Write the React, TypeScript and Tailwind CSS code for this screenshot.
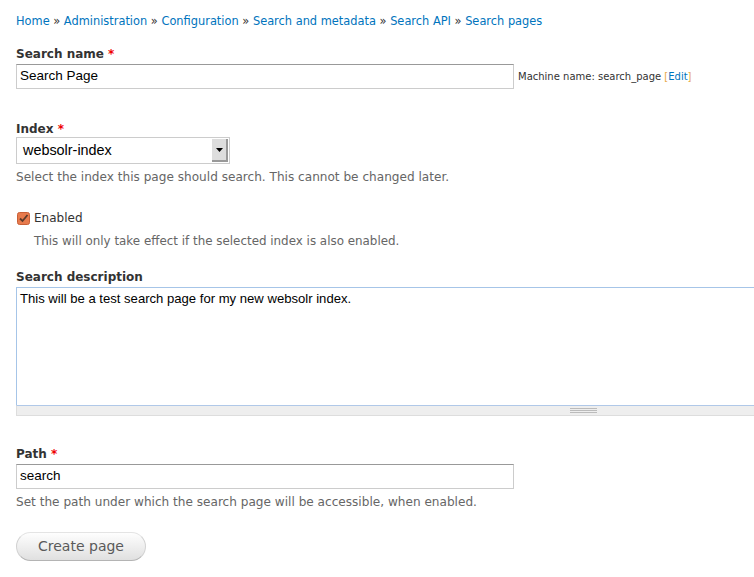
export default function App() {
  const crumbs = [
    "Home",
    "Administration",
    "Configuration",
    "Search and metadata",
    "Search API",
    "Search pages",
  ];

  return (
    <div className="h-[577px] w-[754px] overflow-hidden bg-white font-['DejaVu_Sans',sans-serif] text-[12px] text-[#333]">
      <div className="px-4 pt-[13px]">
        {/* breadcrumb */}
        <div className="h-4 whitespace-nowrap text-[11.4px] leading-4">
          {crumbs.map((c, i) => (
            <span key={c}>
              {i > 0 ? <span className="text-[#333]"> » </span> : null}
              <a className="text-[#0074bd]">{c}</a>
            </span>
          ))}
        </div>

        {/* search name */}
        <label className="mt-[17px] block h-4 font-bold leading-4">
          Search name <span className="text-[#e00]">*</span>
        </label>
        <div className="mt-[2px] flex items-center">
          <div className="flex h-[25px] w-[498px] items-center border border-[#ccc] border-t-[#999] px-[3px] font-['Liberation_Sans',sans-serif] text-[13.5px] text-black">
            Search Page
          </div>
          <span className="ml-[4px] whitespace-nowrap text-[10px]">
            Machine name: search_page <span className="text-[#e8a94c]">[</span>
            <a className="text-[#0074bd]">Edit</a>
            <span className="text-[#e8a94c]">]</span>
          </span>
        </div>

        {/* index */}
        <label className="mt-[32px] block h-4 font-bold leading-4">
          Index <span className="text-[#e00]">*</span>
        </label>
        <div className="flex h-[27px] w-[214px] items-center justify-between border border-[#ccc] pl-[6px] pr-px font-['Liberation_Sans',sans-serif] text-[14.4px] text-black">
          <span>websolr-index</span>
          <span className="flex h-[23px] w-[16px] items-center justify-center border-r-2 border-b-2 border-[#999] bg-[#ddd]">
            <svg width="7" height="4" viewBox="0 0 7 4">
              <path d="M0 0H7L3.5 4Z" fill="#000" />
            </svg>
          </span>
        </div>
        <div className="mt-[5px] h-4 text-[12.1px] leading-4 text-[#666]">
          Select the index this page should search. This cannot be changed later.
        </div>

        {/* enabled */}
        <div className="mt-[25px] flex h-4 items-center leading-4">
          <svg width="13" height="13" viewBox="0 0 13 13" className="ml-px">
            <rect x="0.5" y="0.5" width="12" height="12" rx="2" fill="#e77a4c" stroke="#c95f36" />
            <path d="M3 6.5L5.5 9L10.5 3" fill="none" stroke="#5a3a2a" strokeWidth="1.8" />
          </svg>
          <span className="ml-[4px]">Enabled</span>
        </div>
        <div className="ml-[18px] mt-[7px] h-4 text-[11.9px] leading-4 text-[#666]">
          This will only take effect if the selected index is also enabled.
        </div>

        {/* description */}
        <label className="mt-[20px] block h-4 font-bold leading-4">Search description</label>
        <div className="mt-[2px] w-[1134px]">
          <div className="h-[118px] border border-b-0 border-[#a6c5e8] px-[3px] pt-[2px] font-['Liberation_Sans',sans-serif] text-[13.1px] leading-[18px] text-black">
            This will be a test search page for my new websolr index.
          </div>
          <div className="flex h-[11px] items-center justify-center border border-t-[#b0c8e8] border-[#ddd] bg-[#eee]">
            <div className="flex w-[27px] flex-col gap-px">
              <div className="h-px bg-[#bbb]" />
              <div className="h-px bg-[#bbb]" />
              <div className="h-px bg-[#bbb]" />
            </div>
          </div>
        </div>

        {/* path */}
        <label className="mt-[30px] block h-4 font-bold leading-4">
          Path <span className="text-[#e00]">*</span>
        </label>
        <div className="mt-[2px] flex h-[25px] w-[498px] items-center border border-[#ccc] border-t-[#999] px-[3px] font-['Liberation_Sans',sans-serif] text-[13.5px] text-black">
          search
        </div>
        <div className="mt-[5px] h-4 text-[12.1px] leading-4 text-[#666]">
          Set the path under which the search page will be accessible, when enabled.
        </div>

        <button
          type="button"
          className="mt-[22px] flex h-[29px] w-[130px] items-center justify-center rounded-full border border-[#e4e4e4] border-x-[#d2d2d2] border-b-[#b4b4b4] bg-gradient-to-b from-[#fefefe] to-[#e0e0e0] text-[14px] text-[#5a5a5a]"
        >
          Create page
        </button>
      </div>
    </div>
  );
}
